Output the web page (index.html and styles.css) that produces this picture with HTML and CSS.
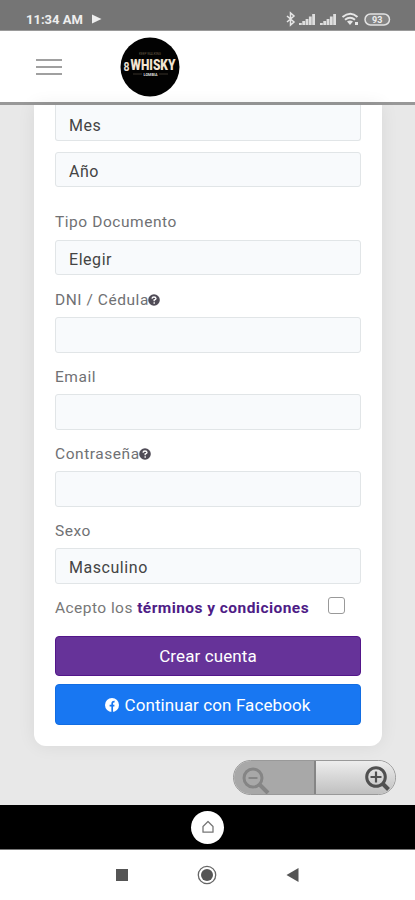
FILE: index.html
```html
<!DOCTYPE html>
<html lang="es">
<head>
<meta charset="utf-8">
<meta name="viewport" content="width=device-width, initial-scale=1">
<title>Crear cuenta</title>
<link rel="stylesheet" href="styles.css">
</head>
<body>
<div class="status">
  <span class="time">11:34 AM</span>
  <svg class="play" width="10" height="10" viewBox="0 0 10 10"><path d="M0 .5 9.500 5 0 9.500z" fill="#eee"/></svg>
  <svg class="status-icons" width="110" height="16" viewBox="0 0 110 16">
    <path d="m3 5 7 6-3.500 3V2L10 5l-7 6" fill="none" stroke="#e6e6e6" stroke-width="1.500"/>
    <g fill="#dedede"><path d="M15 12h2.800v2H15zM18.300 10h2.800v4h-2.800zM21.600 8h2.800v6h-2.800zM24.900 5.500h2.800V14h-2.800zM28.200 3H31v11h-2.800z"/><path d="M36 12h2.800v2H36zM39.300 10h2.800v4h-2.800zM42.600 8h2.800v6h-2.800zM45.900 5.500h2.800V14h-2.800zM49.200 3H52v11h-2.800z"/></g>
    <path d="M58.500 6q8-6.500 15 0M61 8.800q5-4 10 0" fill="none" stroke="#e6e6e6" stroke-width="2"/>
    <path d="M63 10.500q3-2 6 0L66 14zM71 11h3v3h-3z" fill="#e6e6e6"/>
    <rect x="81" y="3" width="24.500" height="11" rx="5.500" fill="#858585" stroke="#e2e2e2" stroke-width="1.500"/>
    <text x="93.200" y="12" class="battery-text" text-anchor="middle">93</text>
  </svg>
</div>
<header class="header">
  <div class="burger"><i></i><i></i><i></i></div>
  <svg class="logo" width="60" height="60" viewBox="0 0 60 60">
    <circle cx="30" cy="30" r="29.500" fill="#020202"/>
    <text x="19" y="18" class="logo-small" textLength="22" lengthAdjust="spacingAndGlyphs">KEEP WALKING</text>
    <text x="3.500" y="34" class="logo-mark" textLength="6" lengthAdjust="spacingAndGlyphs">8</text>
    <text x="10.500" y="32.500" class="logo-word" textLength="45" lengthAdjust="spacingAndGlyphs">WHISKY</text>
    <path d="M13 37h9m17 0h9" stroke="#39332b"/>
    <text x="23.500" y="39" class="logo-foot" textLength="14" lengthAdjust="spacingAndGlyphs">LOMBIA</text>
  </svg>
</header>
<main class="content">
  <form class="card">
    <div class="field cut">Mes</div>
    <div class="field year">Año</div>
    <div class="label first">Tipo Documento</div>
    <div class="field type"><span>Elegir</span></div>
    <div class="label dni">DNI / Cédula<svg class="help" width="12" height="12" viewBox="0 0 12 12"><circle cx="6" cy="6" r="5.800" fill="#504c57"/><path d="M4 4.700Q4.200 3 6 3t2 1.500Q8 5.500 6.200 6v1.200M6.200 8.200v1.500" fill="none" stroke="#fff" stroke-width="1.400"/></svg></div>
    <div class="field"></div>
    <div class="label">Email</div>
    <div class="field"></div>
    <div class="label">Contraseña<svg class="help" width="12" height="12" viewBox="0 0 12 12"><circle cx="6" cy="6" r="5.800" fill="#504c57"/><path d="M4 4.700Q4.200 3 6 3t2 1.500Q8 5.500 6.200 6v1.200M6.200 8.200v1.500" fill="none" stroke="#fff" stroke-width="1.400"/></svg></div>
    <div class="field"></div>
    <div class="label">Sexo</div>
    <div class="field">Masculino</div>
    <div class="terms"><span>Acepto los <b>términos y condiciones</b></span><i class="check"></i></div>
    <div class="button create">Crear cuenta</div>
    <div class="button facebook"><svg width="14" height="14" viewBox="0 0 14 14"><circle cx="7" cy="7" r="7" fill="#fff"/><path d="M7.200 14V5.400Q7.200 3.400 9.600 3.600M4.600 7.700h4.800" fill="none" stroke="#1877f2" stroke-width="1.700"/></svg><span>Continuar con Facebook</span></div>
  </form>
  <div class="zoom">
    <div class="zoom-out"><svg width="30" height="30" viewBox="0 0 30 30" fill="none" stroke="#858585"><circle cx="12" cy="12" r="9" stroke-width="3"/><path d="M7.500 12h9" stroke-width="2"/><path d="m18 18 9 9" stroke-width="4"/></svg></div>
    <div class="zoom-in"><svg width="28" height="28" viewBox="0 0 28 28" fill="none" stroke="#505050"><circle cx="12" cy="12" r="9.300" stroke-width="3"/><path d="M6.500 12h11M12 6.500v11" stroke-width="2.200"/><path d="m18.500 18.500 6 6" stroke-width="4"/></svg></div>
  </div>
</main>
<div class="home-bar"><div class="home"><svg width="14" height="14" viewBox="0 0 14 14"><path d="M2 12.200V6.500L7 1.500l5 5v5.700z" fill="none" stroke="#777" stroke-width="1.300" stroke-linejoin="round"/></svg></div></div>
<nav class="nav">
  <svg width="12" height="12"><rect width="12" height="12" fill="#555"/></svg>
  <svg width="20" height="20" viewBox="0 0 20 20"><circle cx="10" cy="10" r="8.700" fill="none" stroke="#666" stroke-width="1.300"/><circle cx="10" cy="10" r="6" fill="#555"/></svg>
  <svg width="13" height="14" viewBox="0 0 13 14"><path d="M12.500 0v14L.5 7z" fill="#555"/></svg>
</nav>
</body>
</html>
```
FILE: styles.css
```css
* { box-sizing: border-box; }
body { margin: 0; width: 415px; height: 900px; overflow: hidden; font-family: Roboto, sans-serif; background: #fff; display: flex; flex-direction: column; }
svg { display: block; flex: none; }
.status { height: 31px; flex: none; background: #757575; border-bottom: 1px solid #9a9a9a; display: flex; align-items: center; padding: 8px 21px 0 26px; }
.time { font-size: 13px; font-weight: 700; color: #eee; width: 58px; white-space: nowrap; }
.play { margin-left: 8px; }
.status-icons { margin-left: auto; }
.battery-text { font-size: 9px; font-weight: 700; fill: #eee; }
.header { height: 74px; flex: none; background: #fff; border-bottom: 3px solid #989898; display: flex; align-items: center; padding-left: 36px; }
.burger { width: 26px; display: flex; flex-direction: column; gap: 5px; }
.burger i { height: 2px; background: #a0a0a0; }
.logo { margin-left: 58px; }
.logo-small { font-size: 3.500px; fill: #665a45; }
.logo-mark { font-size: 12px; font-weight: 700; fill: #e8dfd3; }
.logo-word { font-size: 14.500px; font-weight: 900; fill: #f3e4d2; }
.logo-foot { font-size: 4px; font-weight: 700; fill: #ddd; }
.content { height: 700px; flex: none; background: #e8e8e8; padding: 0 19px 0 34px; }
.card { width: 348px; height: 641px; background: #fff; border-radius: 0 0 12px 12px; padding: 0 21px; box-shadow: 0 0 18px rgba(0, 0, 0, .07); }
.field { width: 306px; height: 36px; border: 1px solid #e1e5e7; border-radius: 3px; background: #f8fafc; padding: 3px 14px 0 13px; display: flex; align-items: center; font-size: 16px; letter-spacing: .55px; color: #444; }
.field.cut { border-top: 0; padding-top: 5px; border-radius: 0 0 3px 3px; }
.field.year { margin-top: 11px; height: 35px; padding-top: 4px; }
.field.type { height: 35px; padding-top: 4px; }
.field.type span { height: 18px; line-height: 18px; overflow: hidden; }
.label { height: 41px; display: flex; align-items: center; padding: 6px 0 0; font-size: 15.500px; letter-spacing: .55px; color: #707174; white-space: nowrap; }
.label.first { height: 53px; padding: 17px 0 0; }
.label.dni { height: 42px; padding-top: 7px; }
.help { margin-left: -1px; margin-top: 1px; }
.terms { height: 52px; display: flex; align-items: flex-start; padding-top: 13px; font-size: 15.500px; line-height: 22px; letter-spacing: .45px; color: #777; white-space: nowrap; }
.terms span { width: 273px; }
.terms b { color: #4e1c86; }
.check { width: 17px; height: 17px; border: 1.500px solid #999; border-radius: 3px; }
.button { width: 306px; display: flex; align-items: center; justify-content: center; color: #fff; font-size: 17px; letter-spacing: .1px; border-radius: 4px; white-space: nowrap; }
.create { height: 40px; background: #663399; border: 1px solid #53168a; }
.facebook { height: 41px; margin-top: 8px; gap: 5px; background: #1877f2; border: 1px solid #126de2; }
.zoom { margin: 14px 0 0 auto; width: 163px; height: 35px; display: flex; border: 1px solid #999; border-radius: 18px; overflow: hidden; }
.zoom-out { width: 82px; background: #a8a8a8; border-right: 2px solid #858585; padding: 5px 0 0 7px; }
.zoom-in { flex: 1; background: linear-gradient(#ededed, #c0c0c0); display: flex; justify-content: flex-end; padding: 4px 3px 0 0; }
.home-bar { height: 45px; flex: none; background: #000; border-bottom: 1px solid #777; display: flex; justify-content: center; align-items: center; }
.home { width: 33px; height: 33px; border-radius: 50%; background: #fff; display: flex; align-items: center; justify-content: center; }
.nav { height: 50px; background: #fff; display: flex; align-items: center; justify-content: space-between; padding: 0 116px; }
```
